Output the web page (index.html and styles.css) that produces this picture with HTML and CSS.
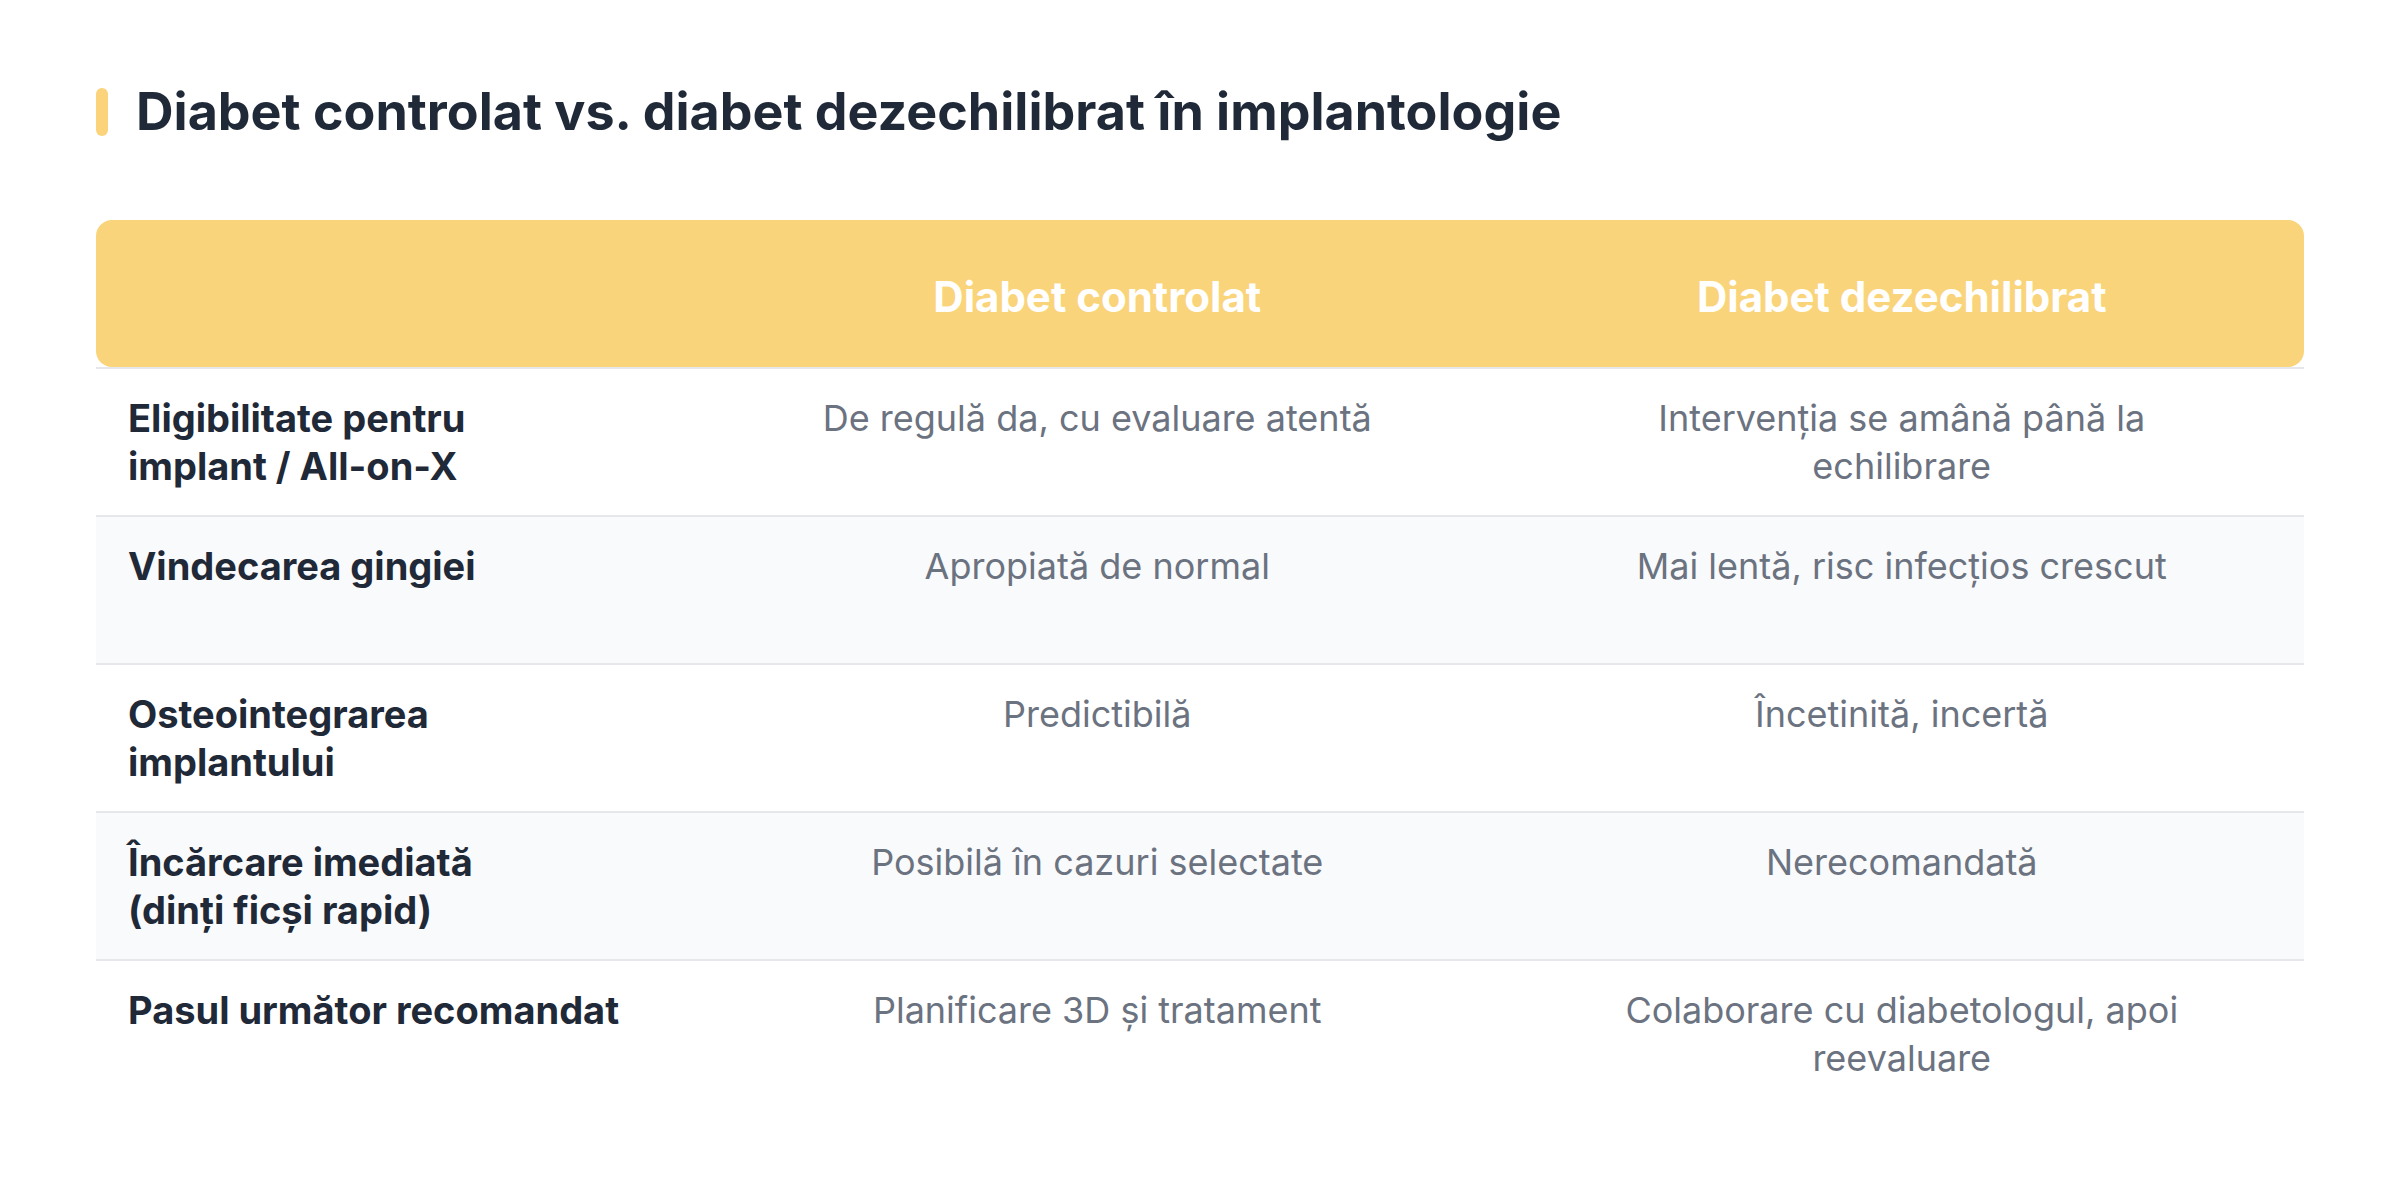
FILE: index.html
```html
<!DOCTYPE html>
<html lang="ro">
<head>
<meta charset="utf-8">
<title>Diabet controlat vs. diabet dezechilibrat</title>
<link rel="stylesheet" href="styles.css">
</head>
<body>
<main class="page">
  <header class="title-row">
    <span class="accent"></span>
    <h1 class="title">Diabet controlat vs. diabet dezechilibrat în implantologie</h1>
  </header>
  <section class="table">
    <div class="head">
      <div class="hcell"></div>
      <div class="hcell">Diabet controlat</div>
      <div class="hcell">Diabet dezechilibrat</div>
    </div>
    <div class="row">
      <div class="label">Eligibilitate pentru<br>implant / All-on-X</div>
      <div class="val">De regulă da, cu evaluare atentă</div>
      <div class="val">Intervenția se amână până la echilibrare</div>
    </div>
    <div class="row alt">
      <div class="label">Vindecarea gingiei</div>
      <div class="val">Apropiată de normal</div>
      <div class="val">Mai lentă, risc infecțios crescut</div>
    </div>
    <div class="row">
      <div class="label">Osteointegrarea<br>implantului</div>
      <div class="val">Predictibilă</div>
      <div class="val">Încetinită, incertă</div>
    </div>
    <div class="row alt">
      <div class="label">Încărcare imediată<br>(dinți ficși rapid)</div>
      <div class="val">Posibilă în cazuri selectate</div>
      <div class="val">Nerecomandată</div>
    </div>
    <div class="row">
      <div class="label">Pasul următor recomandat</div>
      <div class="val">Planificare 3D și tratament</div>
      <div class="val">Colaborare cu diabetologul, apoi reevaluare</div>
    </div>
  </section>
</main>
</body>
</html>
```

FILE: styles.css
```css
* { box-sizing: border-box; }
html, body { margin: 0; padding: 0; background: #ffffff; }
body { font-family: Inter, "Noto Sans", "Liberation Sans", sans-serif; }

.page { padding: 81px 96px 40px; }

.title-row {
  display: flex;
  align-items: center;
  gap: 28px;
  height: 62px;
  margin-bottom: 77px;
}
.accent {
  width: 12px;
  height: 48px;
  border-radius: 6px;
  background: #FBD37A;
  flex: none;
}
.title {
  margin: 0;
  font-size: 52px;
  line-height: 62px;
  font-weight: 700;
  color: #1F2937;
}

.table { width: 2208px; }

.head {
  display: grid;
  grid-template-columns: 599px 1fr 1fr;
  height: 147px;
  padding-top: 7px;
  background: #FAD47B;
  border-radius: 16px;
  align-items: center;
}
.hcell {
  text-align: center;
  color: #ffffff;
  font-weight: 700;
  font-size: 42px;
  line-height: 50px;
}

.row {
  display: grid;
  grid-template-columns: 599px 1fr 1fr;
  height: 148px;
  border-top: 2px solid #E5E7EB;
  background: #ffffff;
}
.row.alt { background: #F9FAFB; }

.label, .val {
  padding: 25px 32px;
  line-height: 48px;
}
.label {
  font-size: 38px;
  font-weight: 700;
  color: #1F2937;
  white-space: nowrap;
}
.val {
  font-size: 36px;
  text-align: center;
  color: #6B7280;
  padding-left: 96px;
  padding-right: 96px;
}
```
